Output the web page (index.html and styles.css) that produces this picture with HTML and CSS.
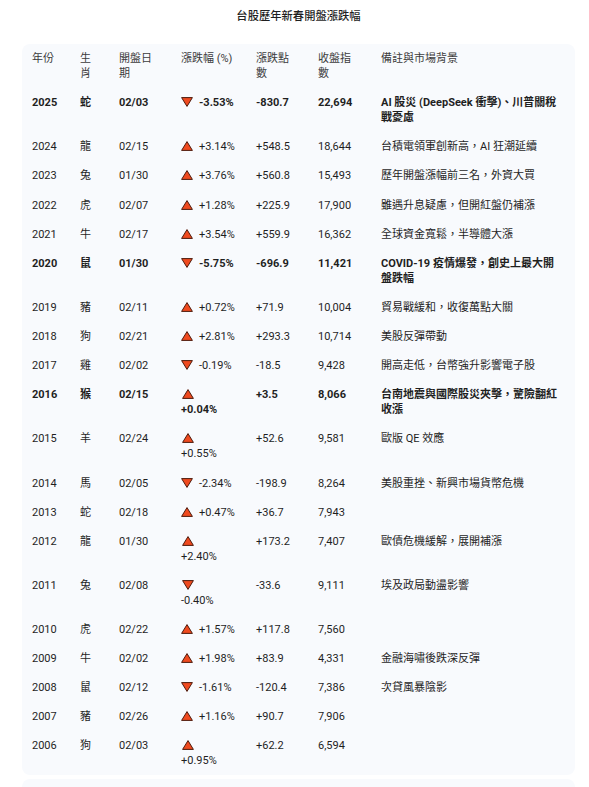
FILE: index.html
```html
<!DOCTYPE html>
<html lang="zh-Hant">
<head>
<meta charset="utf-8">
<title>台股歷年新春開盤漲跌幅</title>
<link rel="stylesheet" href="styles.css">
</head>
<body>
<div class="page">
  <h1 class="title">台股歷年新春開盤漲跌幅</h1>
  <div class="card">
    <table class="tbl">
      <colgroup>
        <col class="c-year"><col class="c-zod"><col class="c-date"><col class="c-chg"><col class="c-pts"><col class="c-close"><col class="c-note">
      </colgroup>
      <thead>
        <tr><th>年份</th><th>生肖</th><th>開盤日期</th><th class="nw">漲跌幅 (%)</th><th>漲跌點數</th><th>收盤指數</th><th>備註與市場背景</th></tr>
      </thead>
      <tbody>
        <tr class="strong"><td>2025</td><td>蛇</td><td>02/03</td><td class="chg"><svg class="tri" width="12" height="10" viewBox="0 0 12 10"><polygon points="0.6,0.6 11.4,0.6 6,9.4" /></svg>-3.53%</td><td>-830.7</td><td>22,694</td><td class="note">AI 股災 (DeepSeek 衝擊)、川普關稅戰憂慮</td></tr>
        <tr><td>2024</td><td>龍</td><td>02/15</td><td class="chg"><svg class="tri" width="12" height="10" viewBox="0 0 12 10"><polygon points="6,0.6 11.4,9.4 0.6,9.4" /></svg>+3.14%</td><td>+548.5</td><td>18,644</td><td class="note">台積電領軍創新高，AI 狂潮延續</td></tr>
        <tr><td>2023</td><td>兔</td><td>01/30</td><td class="chg"><svg class="tri" width="12" height="10" viewBox="0 0 12 10"><polygon points="6,0.6 11.4,9.4 0.6,9.4" /></svg>+3.76%</td><td>+560.8</td><td>15,493</td><td class="note">歷年開盤漲幅前三名，外資大買</td></tr>
        <tr><td>2022</td><td>虎</td><td>02/07</td><td class="chg"><svg class="tri" width="12" height="10" viewBox="0 0 12 10"><polygon points="6,0.6 11.4,9.4 0.6,9.4" /></svg>+1.28%</td><td>+225.9</td><td>17,900</td><td class="note">雖遇升息疑慮，但開紅盤仍補漲</td></tr>
        <tr><td>2021</td><td>牛</td><td>02/17</td><td class="chg"><svg class="tri" width="12" height="10" viewBox="0 0 12 10"><polygon points="6,0.6 11.4,9.4 0.6,9.4" /></svg>+3.54%</td><td>+559.9</td><td>16,362</td><td class="note">全球資金寬鬆，半導體大漲</td></tr>
        <tr class="strong"><td>2020</td><td>鼠</td><td>01/30</td><td class="chg"><svg class="tri" width="12" height="10" viewBox="0 0 12 10"><polygon points="0.6,0.6 11.4,0.6 6,9.4" /></svg>-5.75%</td><td>-696.9</td><td>11,421</td><td class="note">COVID-19 疫情爆發，創史上最大開盤跌幅</td></tr>
        <tr><td>2019</td><td>豬</td><td>02/11</td><td class="chg"><svg class="tri" width="12" height="10" viewBox="0 0 12 10"><polygon points="6,0.6 11.4,9.4 0.6,9.4" /></svg>+0.72%</td><td>+71.9</td><td>10,004</td><td class="note">貿易戰緩和，收復萬點大關</td></tr>
        <tr><td>2018</td><td>狗</td><td>02/21</td><td class="chg"><svg class="tri" width="12" height="10" viewBox="0 0 12 10"><polygon points="6,0.6 11.4,9.4 0.6,9.4" /></svg>+2.81%</td><td>+293.3</td><td>10,714</td><td class="note">美股反彈帶動</td></tr>
        <tr><td>2017</td><td>雞</td><td>02/02</td><td class="chg"><svg class="tri" width="12" height="10" viewBox="0 0 12 10"><polygon points="0.6,0.6 11.4,0.6 6,9.4" /></svg>-0.19%</td><td>-18.5</td><td>9,428</td><td class="note">開高走低，台幣強升影響電子股</td></tr>
        <tr class="strong"><td>2016</td><td>猴</td><td>02/15</td><td class="chg stack"><svg class="tri" width="12" height="10" viewBox="0 0 12 10"><polygon points="6,0.6 11.4,9.4 0.6,9.4" /></svg><span class="val">+0.04%</span></td><td>+3.5</td><td>8,066</td><td class="note">台南地震與國際股災夾擊，驚險翻紅收漲</td></tr>
        <tr><td>2015</td><td>羊</td><td>02/24</td><td class="chg stack"><svg class="tri" width="12" height="10" viewBox="0 0 12 10"><polygon points="6,0.6 11.4,9.4 0.6,9.4" /></svg><span class="val">+0.55%</span></td><td>+52.6</td><td>9,581</td><td class="note">歐版 QE 效應</td></tr>
        <tr><td>2014</td><td>馬</td><td>02/05</td><td class="chg"><svg class="tri" width="12" height="10" viewBox="0 0 12 10"><polygon points="0.6,0.6 11.4,0.6 6,9.4" /></svg>-2.34%</td><td>-198.9</td><td>8,264</td><td class="note">美股重挫、新興市場貨幣危機</td></tr>
        <tr><td>2013</td><td>蛇</td><td>02/18</td><td class="chg"><svg class="tri" width="12" height="10" viewBox="0 0 12 10"><polygon points="6,0.6 11.4,9.4 0.6,9.4" /></svg>+0.47%</td><td>+36.7</td><td>7,943</td><td class="note"></td></tr>
        <tr><td>2012</td><td>龍</td><td>01/30</td><td class="chg stack"><svg class="tri" width="12" height="10" viewBox="0 0 12 10"><polygon points="6,0.6 11.4,9.4 0.6,9.4" /></svg><span class="val">+2.40%</span></td><td>+173.2</td><td>7,407</td><td class="note">歐債危機緩解，展開補漲</td></tr>
        <tr><td>2011</td><td>兔</td><td>02/08</td><td class="chg stack"><svg class="tri" width="12" height="10" viewBox="0 0 12 10"><polygon points="0.6,0.6 11.4,0.6 6,9.4" /></svg><span class="val">-0.40%</span></td><td>-33.6</td><td>9,111</td><td class="note">埃及政局動盪影響</td></tr>
        <tr><td>2010</td><td>虎</td><td>02/22</td><td class="chg"><svg class="tri" width="12" height="10" viewBox="0 0 12 10"><polygon points="6,0.6 11.4,9.4 0.6,9.4" /></svg>+1.57%</td><td>+117.8</td><td>7,560</td><td class="note"></td></tr>
        <tr><td>2009</td><td>牛</td><td>02/02</td><td class="chg"><svg class="tri" width="12" height="10" viewBox="0 0 12 10"><polygon points="6,0.6 11.4,9.4 0.6,9.4" /></svg>+1.98%</td><td>+83.9</td><td>4,331</td><td class="note">金融海嘯後跌深反彈</td></tr>
        <tr><td>2008</td><td>鼠</td><td>02/12</td><td class="chg"><svg class="tri" width="12" height="10" viewBox="0 0 12 10"><polygon points="0.6,0.6 11.4,0.6 6,9.4" /></svg>-1.61%</td><td>-120.4</td><td>7,386</td><td class="note">次貸風暴陰影</td></tr>
        <tr><td>2007</td><td>豬</td><td>02/26</td><td class="chg"><svg class="tri" width="12" height="10" viewBox="0 0 12 10"><polygon points="6,0.6 11.4,9.4 0.6,9.4" /></svg>+1.16%</td><td>+90.7</td><td>7,906</td><td class="note"></td></tr>
        <tr><td>2006</td><td>狗</td><td>02/03</td><td class="chg stack"><svg class="tri" width="12" height="10" viewBox="0 0 12 10"><polygon points="6,0.6 11.4,9.4 0.6,9.4" /></svg><span class="val">+0.95%</span></td><td>+62.2</td><td>6,594</td><td class="note"></td></tr>
      </tbody>
    </table>
  </div>
  <div class="card card-next"></div>
</div>
</body>
</html>
```
FILE: styles.css
```css
html, body {
  margin: 0;
  padding: 0;
  background: #ffffff;
}
body {
  font-family: Roboto, "Noto Sans CJK TC", "Noto Sans CJK SC", sans-serif;
  color: #1f1f1f;
  font-size: 11px;
  overflow: hidden;
}
.page {
  padding: 7px 14px 0 22px;
}
.title {
  margin: 0 0 17px 0;
  font-size: 11.3px;
  font-weight: 500;
  line-height: 20px;
  text-align: center;
  color: #1f1f1f;
  padding-left: 0;
}
.card {
  background: #f8fafd;
  border-radius: 8px;
  padding: 0 0 0 10px;
}
.card-next {
  margin-top: 4px;
  height: 40px;
}
.tbl {
  width: 543px;
  table-layout: fixed;
  border-collapse: collapse;
  border-spacing: 0;
}
.c-year { width: 48px; }
.c-zod { width: 39px; }
.c-date { width: 62px; }
.c-chg { width: 75px; }
.c-pts { width: 62px; }
.c-close { width: 63px; }
.c-note { width: 194px; }
.tbl th,
.tbl td {
  padding: 7px 20px 7px 0;
  line-height: 15.1px;
  vertical-align: top;
  text-align: left;
  font-weight: 400;
  word-break: normal;
}
.tbl th:last-child,
.tbl td:last-child {
  padding-right: 16px;
}
.tbl th {
  color: #3c3c3c;
}
.nw {
  white-space: nowrap;
}
.strong td {
  font-weight: 700;
}
.chg {
  white-space: nowrap;
}
.tri {
  display: inline-block;
  vertical-align: -1px;
  margin-right: 6px;
}
.tri polygon {
  fill: #ef4a1f;
  stroke: #4d1a0c;
  stroke-width: 1;
  stroke-linejoin: round;
}
.stack .val {
  display: block;
}
.stack .tri {
  display: block;
  margin-top: 2px;
  margin-bottom: 3px;
  margin-left: 1px;
}
```
